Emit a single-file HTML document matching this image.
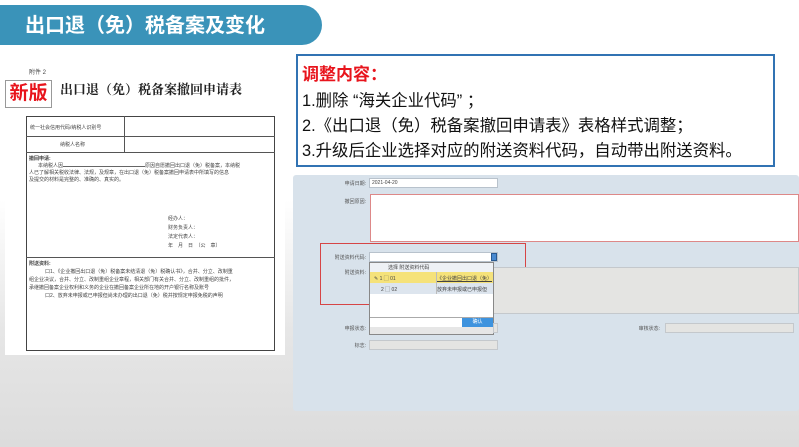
<!DOCTYPE html>
<html><head><meta charset="utf-8"><style>
*{margin:0;padding:0;box-sizing:border-box}
body{width:799px;height:447px;overflow:hidden;position:relative;font-family:"Liberation Sans","Noto Sans CJK SC",sans-serif;background:linear-gradient(#fff 0,#fff 200px,#e6e6e6 330px,#dcdcdc 447px)}
.a{position:absolute}
.s{font-family:"Liberation Serif","Noto Serif CJK SC",serif}
.t{font-size:5px;color:#444;white-space:nowrap}
.l{font-size:5px;color:#555;text-align:right;width:70px;white-space:nowrap}
.in{background:#fff;border:1px solid #b8c2cc}
.g{background:#e4e4e2;border:1px solid #c4c8cc}
</style></head><body>
<div class="a" style="left:0;top:5px;width:322px;height:40px;background:#3a93b9;border-radius:0 20px 20px 0"></div>
<div class="a" style="left:25px;top:11px;font-size:20px;font-weight:bold;color:#fff;line-height:30px;white-space:nowrap">出口退（免）税备案及变化</div>

<div class="a" style="left:5px;top:55px;width:280px;height:300px;background:#fff"></div>
<div class="a t" style="left:29px;top:67px;font-size:6px">附件 2</div>
<div class="a" style="left:5px;top:80px;width:47px;height:28px;border:1px solid #999;color:#e8141c;font-weight:bold;font-size:19px;line-height:26px;text-align:center">新版</div>
<div class="a s" style="left:60px;top:80px;font-size:13px;line-height:20px;font-weight:bold;color:#222;white-space:nowrap">出口退（免）税备案撤回申请表</div>
<div class="a" style="left:26px;top:116px;width:249px;height:235px;border:1px solid #444"></div>
<div class="a" style="left:26px;top:136px;width:249px;border-top:1px solid #555"></div>
<div class="a" style="left:26px;top:152px;width:249px;border-top:1px solid #555"></div>
<div class="a" style="left:124px;top:116px;height:36px;border-left:1px solid #555"></div>
<div class="a" style="left:26px;top:257px;width:249px;border-top:1px solid #555"></div>
<div class="a t" style="left:30px;top:124px">统一社会信用代码/纳税人识别号</div>
<div class="a t" style="left:60px;top:141px">纳税人名称</div>
<div class="a t" style="left:29px;top:155px;font-weight:bold">撤回申请:</div>
<div class="a t" style="left:38px;top:162px">本纳税人因<span style="display:inline-block;width:82px;border-bottom:1px solid #666"></span>原因自愿撤回出口退（免）税备案，本纳税</div>
<div class="a t" style="left:29px;top:169px">人已了解相关税收法律、法规，及规章，在出口退（免）税备案撤回申请表中所填写的信息</div>
<div class="a t" style="left:29px;top:176px">及提交的材料是完整的、准确的、真实的。</div>
<div class="a t" style="left:168px;top:215px">经办人：</div>
<div class="a t" style="left:168px;top:224px">财务负责人：</div>
<div class="a t" style="left:168px;top:233px">法定代表人：</div>
<div class="a t" style="left:168px;top:242px">年　月　日　（公　章）</div>
<div class="a t" style="left:29px;top:260px;font-weight:bold">附送资料:</div>
<div class="a t" style="left:45px;top:268px">口1、《企业撤回出口退（免）税备案未结清退（免）税确认书》，合并、分立、改制重</div>
<div class="a t" style="left:29px;top:276px">组企业决议，合并、分立、改制重组企业章程，相关部门有关合并、分立、改制重组的批件，</div>
<div class="a t" style="left:29px;top:284px">承继撤回备案企业权利和义务的企业在撤回备案企业所在地的开户银行名称及账号</div>
<div class="a t" style="left:45px;top:292px">口2、放弃未申报或已申报但尚未办理的出口退（免）税并按规定申报免税的声明</div>

<div class="a" style="left:296px;top:54px;width:479px;height:113px;border:2px solid #3173b3;background:#fff"></div>
<div class="a" style="left:302px;top:64px;font-size:17px;font-weight:bold;color:#e8141c;line-height:22px">调整内容：</div>
<div class="a" style="left:302px;top:89px;font-size:16.4px;color:#111;line-height:25px;white-space:nowrap">1.删除 “海关企业代码” ；<br>2.《出口退（免）税备案撤回申请表》表格样式调整；<br>3.升级后企业选择对应的附送资料代码，自动带出附送资料。</div>

<div class="a" style="left:293px;top:175px;width:506px;height:236px;background:#d8e2eb;border-radius:3px"></div>
<div class="a l" style="left:296px;top:180px">申请日期:</div>
<div class="a in t" style="left:369px;top:178px;width:129px;height:10px;font-size:5px;padding-left:2px;line-height:8px">2021-04-20</div>
<div class="a l" style="left:296px;top:198px">撤回原因:</div>
<div class="a" style="left:370px;top:194px;width:429px;height:48px;background:#fff;border:1px solid #d88"></div>
<div class="a" style="left:320px;top:243px;width:206px;height:62px;border:1.5px solid #d64545"></div>
<div class="a l" style="left:296px;top:254px">附送资料代码:</div>
<div class="a in" style="left:369px;top:252px;width:129px;height:10px"></div>
<div class="a" style="left:491px;top:253px;width:6px;height:8px;background:#4a8ad0;border:1px solid #2a5a90"></div>
<div class="a l" style="left:296px;top:269px">附送资料:</div>
<div class="a g" style="left:490px;top:267px;width:309px;height:47px"></div>
<div class="a" style="left:369px;top:262px;width:125px;height:73px;background:#fff;border:1px solid #888"></div>
<div class="a" style="left:370px;top:263px;width:123px;height:9px;background:#eef1f5"></div>
<div class="a t" style="left:388px;top:264px">选择 附送资料代码</div>
<div class="a" style="left:370px;top:272px;width:123px;height:11px;background:#f5e27a"></div>
<div class="a t" style="left:374px;top:275px">✎ 1 ▢ 01</div>
<div class="a t" style="left:437px;top:275px;text-decoration:underline">《企业撤回出口退（免）</div>
<div class="a" style="left:370px;top:283px;width:123px;height:11px;background:#dde5ee"></div>
<div class="a t" style="left:381px;top:286px">2 ▢ 02</div>
<div class="a t" style="left:437px;top:286px">放弃未申报或已申报但</div>
<div class="a" style="left:436px;top:272px;height:22px;border-left:1px solid #bbb"></div>
<div class="a" style="left:370px;top:317px;width:123px;border-top:1px solid #aaa"></div>
<div class="a" style="left:462px;top:318px;width:31px;height:9px;background:#3e93de;color:#fff;font-size:5px;text-align:center;line-height:9px">确认</div>
<div class="a" style="left:370px;top:327px;width:123px;height:7px;background:#e6e6e6"></div>
<div class="a l" style="left:296px;top:325px">申报状态:</div>
<div class="a g" style="left:493px;top:323px;width:5px;height:10px"></div>
<div class="a l" style="left:590px;top:325px">审核状态:</div>
<div class="a g" style="left:665px;top:323px;width:129px;height:10px"></div>
<div class="a l" style="left:296px;top:342px">标志:</div>
<div class="a g" style="left:369px;top:340px;width:129px;height:10px"></div>
</body></html>
